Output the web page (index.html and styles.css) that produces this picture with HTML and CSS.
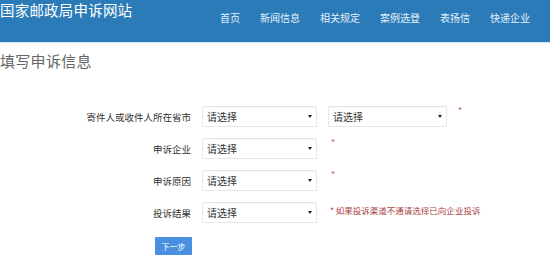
FILE: index.html
```html
<!DOCTYPE html>
<html lang="zh-CN">
<head>
  <meta charset="UTF-8" />
  <meta name="viewport" content="width=device-width, initial-scale=1.0" />
  <title>国家邮政局申诉网站</title>
  <link rel="stylesheet" href="styles.css">
</head>
<body>
  <div class="header">
    <div class="site-title">国家邮政局申诉网站</div>
    <ul class="nav">
      <li>首页</li>
      <li>新闻信息</li>
      <li>相关规定</li>
      <li>案例选登</li>
      <li>表扬信</li>
      <li>快递企业</li>
    </ul>
  </div>

  <h1 class="page-title">填写申诉信息</h1>

  <div class="complaint-form">
    <div class="form-row">
      <label class="form-label">寄件人或收件人所在省市</label>
      <span class="select-wrap"><select><option>请选择</option></select></span>
      <span class="select-wrap wide"><select><option>请选择</option></select></span>
      <span class="required">*</span>
    </div>
    <div class="form-row">
      <label class="form-label">申诉企业</label>
      <span class="select-wrap"><select><option>请选择</option></select></span>
      <span class="required far">*</span>
    </div>
    <div class="form-row">
      <label class="form-label">申诉原因</label>
      <span class="select-wrap"><select><option>请选择</option></select></span>
      <span class="required far">*</span>
    </div>
    <div class="form-row">
      <label class="form-label">投诉结果</label>
      <span class="select-wrap"><select><option>请选择</option></select></span>
      <span class="hint">* 如果投诉渠道不通请选择已向企业投诉</span>
    </div>
    <button class="next-btn">下一步</button>
  </div>
</body>
</html>
```

FILE: styles.css
```css
:root {
  --header-blue: #2b7bb9;
  --text-color: #333;
  --danger-color: #a94442;
  --button-blue: #4a8fe0;
}

body {
  font-family: "Noto Sans CJK SC", "Noto Sans", sans-serif;
  color: var(--text-color);
  background-color: #fff;
  margin: 0;
}

.header {
  display: flex;
  justify-content: space-between;
  height: 42px;
  background-color: var(--header-blue);
  border-bottom: 1px solid #cfe7f6;
  color: #fff;
}

.site-title {
  font-size: 14.5px;
  line-height: 20px;
  letter-spacing: 0.2px;
}

.nav {
  display: flex;
  list-style: none;
  margin: 8px 10px 0 0;
  padding: 0;
}

.nav li {
  padding: 0 10px;
  font-size: 10px;
  line-height: 20px;
  color: #e6f1fa;
}

.page-title {
  margin: 7px 0 0;
  font-size: 15px;
  line-height: 22px;
  font-weight: normal;
  color: #666;
  letter-spacing: 0.3px;
}

.complaint-form {
  margin-top: 34px;
}

.form-row {
  display: flex;
  align-items: center;
  height: 21px;
  margin-bottom: 11px;
}

.form-label {
  width: 191px;
  text-align: right;
  font-size: 9.5px;
  margin-right: 11px;
}

.select-wrap {
  position: relative;
  display: block;
  width: 115px;
  height: 21px;
}

.select-wrap.wide {
  width: 119px;
  margin-left: 11px;
}

.select-wrap select {
  display: block;
  appearance: none;
  width: 100%;
  height: 100%;
  margin: 0;
  padding: 0 0 0 4px;
  border: 1px solid #e6e6e6;
  border-radius: 1px;
  box-shadow: inset 0 1px 1px rgba(0, 0, 0, 0.03);
  background-color: #fff;
  font-family: inherit;
  font-size: 10px;
  color: var(--text-color);
}

.select-wrap::after {
  content: "";
  position: absolute;
  right: 5px;
  top: 9px;
  border-left: 2.5px solid transparent;
  border-right: 2.5px solid transparent;
  border-top: 3px solid #222;
}

.required {
  align-self: flex-start;
  margin-left: 11px;
  font-size: 9px;
  line-height: 10px;
  color: #b5606a;
}

.required.far {
  margin-left: 14px;
}

.hint {
  margin: 0 0 6px 13px;
  font-size: 8.5px;
  color: var(--danger-color);
}

.next-btn {
  display: block;
  margin: 14px 0 0 155px;
  width: 37px;
  height: 18px;
  padding: 0;
  border: none;
  border-radius: 1px;
  background-color: var(--button-blue);
  color: #fff;
  font-family: inherit;
  font-size: 8px;
  cursor: pointer;
}
```
